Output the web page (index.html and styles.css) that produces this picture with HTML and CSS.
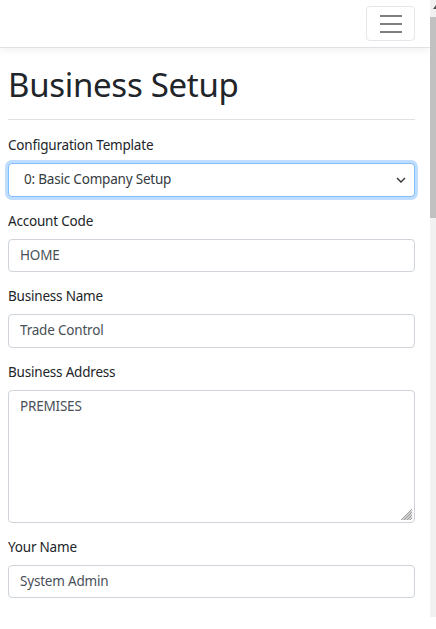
FILE: index.html
```html
<!DOCTYPE html>
<html lang="en">
<head>
<meta charset="utf-8">
<title>Business Setup</title>
<link rel="stylesheet" href="styles.css">
</head>
<body>
<div class="page">
  <nav class="navbar">
    <button class="toggler" type="button" aria-label="Toggle navigation">
      <span class="bar"></span><span class="bar"></span><span class="bar"></span>
    </button>
  </nav>
  <main class="container">
    <h1 class="title">Business Setup</h1>
    <hr class="rule">
    <form class="form">
      <div class="group">
        <label class="label">Configuration Template</label>
        <div class="select focused">
          <span class="select-text">0: Basic Company Setup</span>
          <svg class="chevron" width="10" height="6" viewBox="0 0 10 6"><path d="M1 1l4 4 4-4" fill="none" stroke="#333" stroke-width="1.4"/></svg>
        </div>
      </div>
      <div class="group">
        <label class="label">Account Code</label>
        <div class="input">HOME</div>
      </div>
      <div class="group">
        <label class="label">Business Name</label>
        <div class="input">Trade Control</div>
      </div>
      <div class="group">
        <label class="label">Business Address</label>
        <div class="input textarea">PREMISES
          <svg class="grip" width="14" height="14" viewBox="0 0 14 14"><path d="M13 2L2 13M13 5L5 13M13 8L8 13M13 11L11 13M13 3.5L3.5 13M13 6.5L6.5 13M13 9.5L9.5 13" stroke="#888" stroke-width="0.8"/></svg>
        </div>
      </div>
      <div class="group">
        <label class="label">Your Name</label>
        <div class="input">System Admin</div>
      </div>
    </form>
  </main>
</div>
<div class="scrollbar" aria-hidden="true">
  <div class="sb-arrow"></div>
  <div class="sb-thumb"></div>
</div>
</body>
</html>
```
FILE: styles.css
```css
* { box-sizing: border-box; }
html, body { margin: 0; padding: 0; }
body {
  background: #fff;
  color: #212529;
  font-family: "Noto Sans", "Open Sans", sans-serif;
  font-size: 14px;
  line-height: 1.5;
  overflow: hidden;
}
.page { width: 430px; }
.navbar {
  height: 48px;
  display: flex;
  justify-content: flex-end;
  align-items: center;
  padding: 0 15px 0 0;
  border-bottom: 1px solid #dee2e6;
  box-shadow: 0 3px 8px rgba(0,0,0,0.05);
  position: relative;
}
.toggler {
  width: 49px;
  height: 35px;
  background: #fff;
  border: 1px solid #e4e6e8;
  border-radius: 4px;
  padding: 0;
  display: flex;
  flex-direction: column;
  justify-content: center;
  align-items: center;
  gap: 6px;
}
.bar { display: block; width: 22px; height: 2px; background: #7f7f7f; }
.container { padding: 0 15px 0 8px; }
.title {
  margin: 0;
  padding-top: 17px;
  font-size: 33px;
  font-weight: 400;
  line-height: 40px;
  letter-spacing: -0.3px;
  height: 57px;
}
.rule { margin: 14px 0 15px; border: 0; border-top: 1px solid #dee2e6; }
.group { margin-bottom: 14px; }
.label { display: block; margin-bottom: 7px; font-size: 13.5px; letter-spacing: -0.2px; line-height: 21px; }
.input, .select {
  height: 33.5px;
  border: 1px solid #ced4da;
  border-radius: 4px;
  padding: 5px 11px;
  color: #495057;
  font-size: 13.5px;
  letter-spacing: -0.2px;
  line-height: 21px;
  background: #fff;
}
.select {
  display: flex;
  align-items: center;
  justify-content: space-between;
  padding: 0 8px 0 15px;
  color: #343a40;
}
.select.focused {
  border-color: #80bdff;
  box-shadow: 0 0 0 3px rgba(0,123,255,0.25);
}
.textarea { height: 133px; position: relative; }
.grip { position: absolute; right: 1px; bottom: 1px; }
.scrollbar {
  position: fixed;
  top: 0;
  left: 430px;
  width: 6px;
  height: 617px;
  background: #f1f1f1;
}
.sb-arrow { height: 17px; position: relative; }
.sb-arrow::after {
  content: "";
  position: absolute;
  left: 3px;
  top: 5px;
  border-left: 3px solid transparent;
  border-right: 3px solid transparent;
  border-bottom: 4px solid #505050;
}
.sb-thumb { height: 201px; background: #c1c1c1; }
```
